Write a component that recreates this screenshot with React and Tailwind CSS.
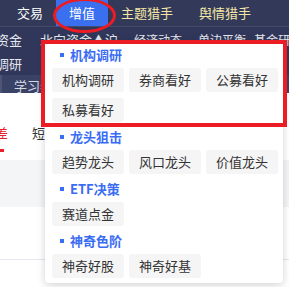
import React from 'react';

const font = { fontFamily: '"Noto Sans CJK SC", "Noto Sans", sans-serif' };

const sections = [
  { title: '机构调研', items: ['机构调研', '券商看好', '公募看好', '私募看好'] },
  { title: '龙头狙击', items: ['趋势龙头', '风口龙头', '价值龙头'] },
  { title: 'ETF决策', items: ['赛道点金'] },
  { title: '神奇色阶', items: ['神奇好股', '神奇好基'] },
];

const navItems = [
  { label: '交易', active: false, color: 'text-white' },
  { label: '增值', active: true, color: 'text-white' },
  { label: '主题猎手', active: false, color: 'text-[#f4e6a6]' },
  { label: '舆情猎手', active: false, color: 'text-[#f4e6a6]' },
];

// dropdown of the 增值 menu
const Dropdown = () => (
  <div className="absolute left-[45px] top-[40px] w-[238px] rounded-[4px] bg-white px-[7px] pb-[5px] shadow-[0_2px_8px_rgba(0,0,0,0.18)]">
    {sections.map((s) => (
      <div key={s.title}>
        <div className="mt-[5px] mb-[3px] flex h-[20px] items-center gap-[6px] pl-[8px]">
          <span className="h-[4px] w-[4px] bg-[#3a6cf4]" />
          <span className="text-[13px] font-bold text-[#3a6cf4]">{s.title}</span>
        </div>
        <div className="grid grid-cols-[72px_72px_72px] gap-x-[5px] gap-y-[6px]">
          {s.items.map((it) => (
            <div
              key={it}
              className="flex h-[24px] items-center justify-center rounded-[3px] bg-[#f5f5f6] text-[13px] text-[#333333]"
            >
              {it}
            </div>
          ))}
        </div>
      </div>
    ))}
  </div>
);

export default function App() {
  return (
    <div className="relative h-[287px] w-[289px] overflow-hidden whitespace-nowrap bg-white" style={font}>
      {/* top nav */}
      <div className="flex h-[27px] border-b border-[#454c6b] bg-[#333a59] pl-[4px]">
        {navItems.map((n) => (
          <div
            key={n.label}
            className={`flex shrink-0 items-center px-[13px] text-[13px] ${n.color} ${n.active ? 'bg-[#3a6ff0]' : ''}`}
          >
            {n.label}
          </div>
        ))}
      </div>

      {/* sub rows */}
      <div className="flex h-[26px] items-center overflow-hidden bg-[#31375a] text-[13px] text-[#e6e8ef]">
        <span className="ml-[-4px] shrink-0">资金</span>
        <span className="ml-[18px] shrink-0">北向资金▲沪</span>
        <span className="ml-[16px] shrink-0 text-[12px]">经济动态</span>
        <span className="ml-[16px] shrink-0 text-[12px]">单边平衡</span>
        <span className="ml-[8px] shrink-0 text-[12px]">基金研究</span>
      </div>
      <div className="flex h-[22px] items-center overflow-hidden bg-[#31375a] text-[13px] text-[#e6e8ef]">
        <span className="ml-[-4px] shrink-0">调研</span>
      </div>
      <div className="flex h-[18px] items-center overflow-hidden border-l-2 border-[#4d5576] bg-[#3a4266] text-[13px] text-[#d5d8e2]">
        <span className="ml-[12px] mt-[4px] shrink-0">学习者</span>
      </div>

      {/* page body */}
      <div className="h-[67px] overflow-hidden bg-white pt-[30px]">
        <div className="flex items-center text-[13px]">
          <span className="ml-[-5px] shrink-0 text-[#e8202a]">差</span>
          <span className="ml-[24px] shrink-0 text-[#333333]">短线</span>
        </div>
        <div className="mt-[6px] h-[3px] w-[4px] bg-[#e8202a]" />
      </div>
      <div className="h-[47px] bg-[#f4f5f7]" />
      <div className="h-[53px] border-b border-[#e6e8f0] bg-white" />

      <Dropdown />

      {/* annotations */}
      <div className="absolute left-[41px] top-[40px] h-[87px] w-[246px] border-4 border-[#ec1c24]" />
      <div className="absolute left-[53px] top-[-2px] h-[35px] w-[63px] rounded-[50%] border-[3px] border-[#ec1c24]" />
    </div>
  );
}
